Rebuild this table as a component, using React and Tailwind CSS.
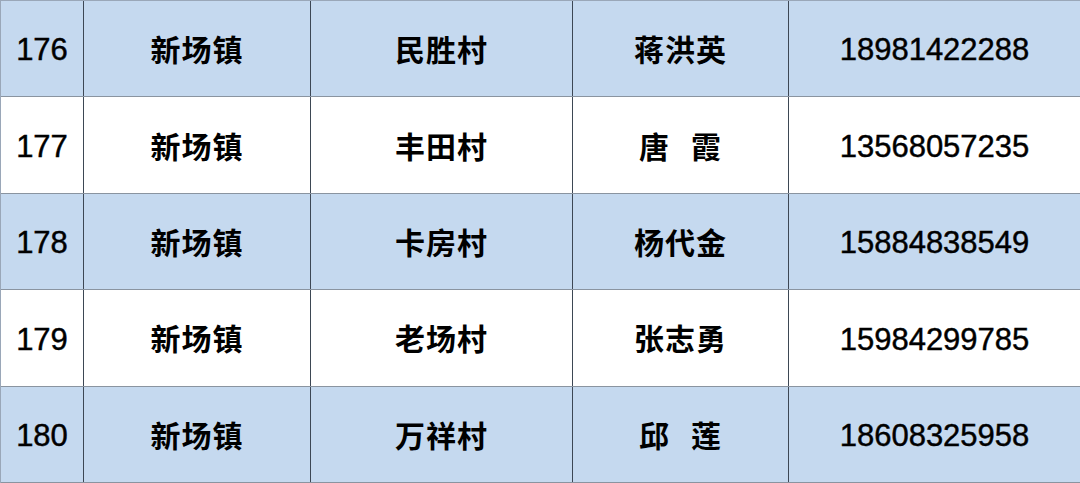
const rows = [
  { no: "176", town: "新场镇", village: "民胜村", name: ["蒋洪英"], phone: "18981422288", blue: true },
  { no: "177", town: "新场镇", village: "丰田村", name: ["唐", "霞"], phone: "13568057235", blue: false },
  { no: "178", town: "新场镇", village: "卡房村", name: ["杨代金"], phone: "15884838549", blue: true },
  { no: "179", town: "新场镇", village: "老场村", name: ["张志勇"], phone: "15984299785", blue: false },
  { no: "180", town: "新场镇", village: "万祥村", name: ["邱", "莲"], phone: "18608325958", blue: true },
];

const cjk = { fontFamily: '"Liberation Sans", "Noto Sans CJK SC", sans-serif' };

export default function App() {
  return (
    <div className="w-[1080px] h-[483px] bg-white flex flex-col border-t border-l border-[#9aa7b8] text-black" style={cjk}>
      {rows.map((r) => (
        <div
          key={r.no}
          className={`flex-1 grid grid-cols-[83px_227px_262px_216px_1fr] border-b border-[#8a94a0] ${
            r.blue ? "bg-[#c5d9ef]" : "bg-white"
          }`}
        >
          <div className="flex items-center justify-center border-r border-[#3d4754] text-[31px] pt-1 [-webkit-text-stroke:0.45px_black]">
            {r.no}
          </div>
          <div className="flex items-center justify-center border-r border-[#3d4754] text-[30px] font-bold tracking-[1px] pt-1">
            {r.town}
          </div>
          <div className="flex items-center justify-center border-r border-[#3d4754] text-[30px] font-bold tracking-[1px] pt-1">
            {r.village}
          </div>
          <div className="flex items-center justify-center gap-[21px] border-r border-[#3d4754] text-[30px] font-bold tracking-[1px] pt-1">
            {r.name.map((n) => (
              <span key={n}>{n}</span>
            ))}
          </div>
          <div className="flex items-center justify-center text-[31px] pt-1 [-webkit-text-stroke:0.45px_black]">
            {r.phone}
          </div>
        </div>
      ))}
    </div>
  );
}
